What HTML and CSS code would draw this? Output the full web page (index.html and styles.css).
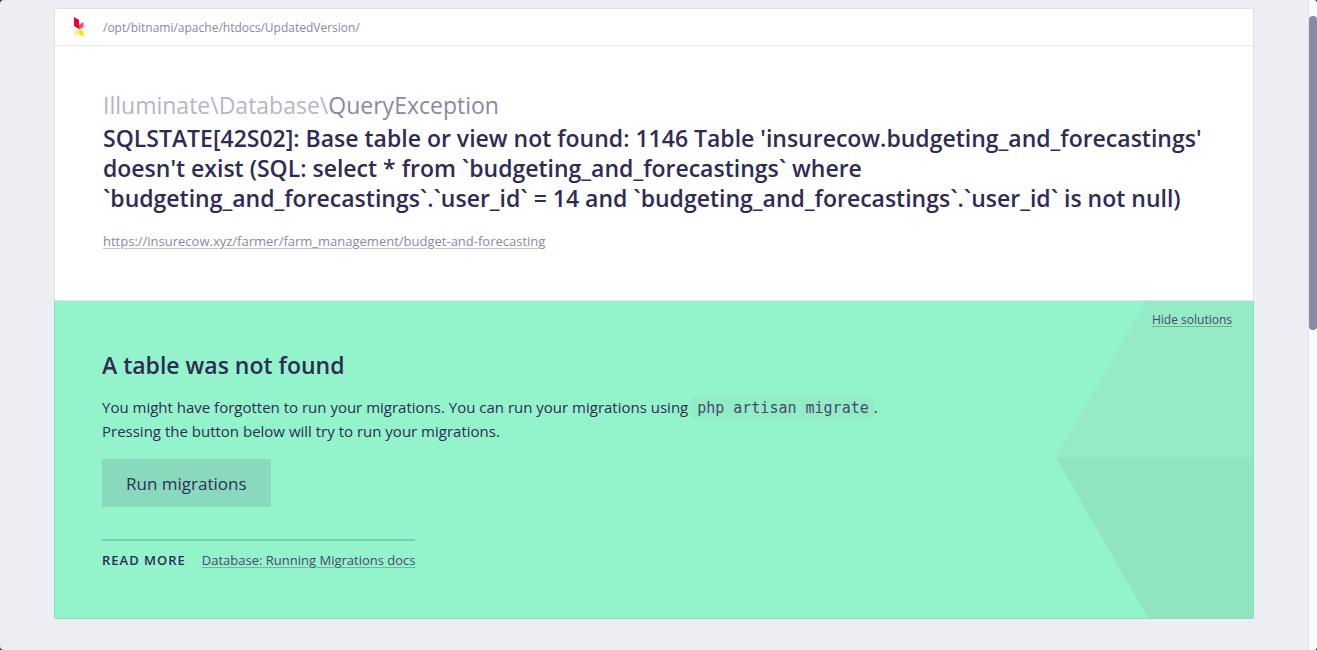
FILE: index.html
```html
<!DOCTYPE html>
<html lang="en">
<head>
<meta charset="utf-8">
<title>SQLSTATE[42S02]: Base table or view not found</title>
<link rel="stylesheet" href="styles.css">
</head>
<body>
<div class="window">
  <main class="page">
    <section class="summary">
      <header class="path-bar">
        <svg class="logo" viewBox="0 0 10 20" aria-hidden="true">
          <path fill="#e8003a" d="M0 0 5 3V12L0 9Z"/>
          <path fill="#ff4470" d="M5 8 9.5 5V10L5 12.5Z"/>
          <path fill="#fff082" d="M5 12V17L.5 19.5V14.5Z"/>
          <path fill="#ffe100" d="M5 12 9.5 14.5V19.5L5 17Z"/>
        </svg>
        <span class="path">/opt/bitnami/apache/htdocs/UpdatedVersion/</span>
      </header>
      <div class="exception">
        <div class="class-name"><span class="namespace">Illuminate\Database\</span>QueryException</div>
        <h1 class="message">SQLSTATE[42S02]: Base table or view not found: 1146 Table 'insurecow.budgeting_and_forecastings' doesn't exist (SQL: select * from `budgeting_and_forecastings` where `budgeting_and_forecastings`.`user_id` = 14 and `budgeting_and_forecastings`.`user_id` is not null)</h1>
        <a class="url" href="#">https://insurecow.xyz/farmer/farm_management/budget-and-forecasting</a>
      </div>
    </section>
    <section class="solution">
      <svg class="facets" viewBox="0 0 197 316" preserveAspectRatio="none" aria-hidden="true">
        <path fill="#95ebc6" d="M90 0H197V156H0Z"/>
        <path fill="#8fe5c0" d="M0 156H197V316H92Z"/>
      </svg>
      <button class="hide" type="button">Hide solutions</button>
      <h2 class="solution-title">A table was not found</h2>
      <p class="description">You might have forgotten to run your migrations. You can run your migrations using <code>php artisan migrate</code>.<br>Pressing the button below will try to run your migrations.</p>
      <button class="run" type="button">Run migrations</button>
      <div class="read-more">
        <h3 class="read-title">Read more</h3>
        <a class="docs" href="#">Database: Running Migrations docs</a>
      </div>
    </section>
  </main>
  <div class="scroll-track"><div class="scroll-thumb"></div></div>
</div>
</body>
</html>
```
FILE: styles.css
```css
* { box-sizing: border-box; }
html { background: #333; }
body {
  margin: 0;
  font-family: "Open Sans", "Noto Sans", sans-serif;
  color: #302b54;
}
h1, h2, h3, p { margin: 0; }
button { border: 0; font: inherit; cursor: pointer; }
.window {
  display: flex;
  height: 100vh;
  overflow: hidden;
  border-radius: 4px;
  background: #edeef4;
}
.page {
  flex: 1;
  max-width: 1309px;
  margin: 0 auto;
  padding: 8px 55px 32px 54px;
}
.summary {
  background: #fff;
  border: 1px solid #e2e0ec;
}
.path-bar {
  display: flex;
  align-items: center;
  gap: 19px;
  height: 37px;
  padding: 0 19px;
  border-bottom: 1px solid #e6e5ee;
}
.logo { width: 10px; height: 20px; }
.path { font-size: 12px; color: #8b88a5; }
.exception { padding: 44px 48px 49px; }
.class-name { margin-bottom: 2px; font-size: 23px; line-height: 31px; color: #8c88a2; }
.namespace { color: #b8b5c6; }
.message {
  font-size: 23px;
  line-height: 30px;
  font-weight: 600;
}
.url {
  display: inline-block;
  margin-top: 18px;
  font-size: 13px;
  line-height: 20px;
  color: #8b88a5;
  text-decoration-color: #c5c3d9;
  text-underline-offset: 2px;
}
.solution {
  position: relative;
  padding: 48px 47px;
  background: #93f3ca;
  border: 1px solid #85dfbf;
  border-top: 0;
  border-radius: 0 0 2px 2px;
}
.facets {
  position: absolute;
  top: 0;
  right: 0;
  width: 197px;
  height: 100%;
}
.hide {
  position: absolute;
  top: 10px;
  right: 21px;
  padding: 0;
  background: none;
  font-size: 12px;
  line-height: 18px;
  color: #4b476d;
  text-decoration: underline;
  text-decoration-color: #70b4a2;
  text-underline-offset: 2px;
}
.solution-title { font-size: 23px; line-height: 32px; font-weight: 600; }
.description { margin-top: 14px; font-size: 15px; line-height: 24px; }
code {
  padding: 1px 4px;
  border: 1px solid #8eeac4;
  border-radius: 2px;
  background: #92edc7;
  color: #4b476d;
  font-family: "DejaVu Sans Mono", monospace;
  font-size: 15px;
  line-height: 1;
}
.run {
  display: block;
  height: 48px;
  margin-top: 16px;
  padding: 0 24px;
  border-radius: 2px;
  background: #89d9bd;
  color: #302f5b;
  font-size: 17px;
}
.read-more {
  display: inline-flex;
  align-items: baseline;
  gap: 16px;
  margin-top: 32px;
  padding-top: 9px;
  border-top: 2px solid #80c9b2;
  line-height: 20px;
}
.read-title {
  font-size: 13px;
  font-weight: 600;
  letter-spacing: 1px;
  text-transform: uppercase;
}
.docs {
  font-size: 13px;
  color: #4b476d;
  text-decoration-color: #70b4a2;
  text-underline-offset: 2px;
}
.scroll-track {
  flex: none;
  width: 8px;
  padding-top: 16px;
  background: #fafafa;
  box-shadow: -1px 0 #e1e1e6;
}
.scroll-thumb { height: 50vh; max-height: 314px; border-radius: 4px; background: #8d88a5; }
```
